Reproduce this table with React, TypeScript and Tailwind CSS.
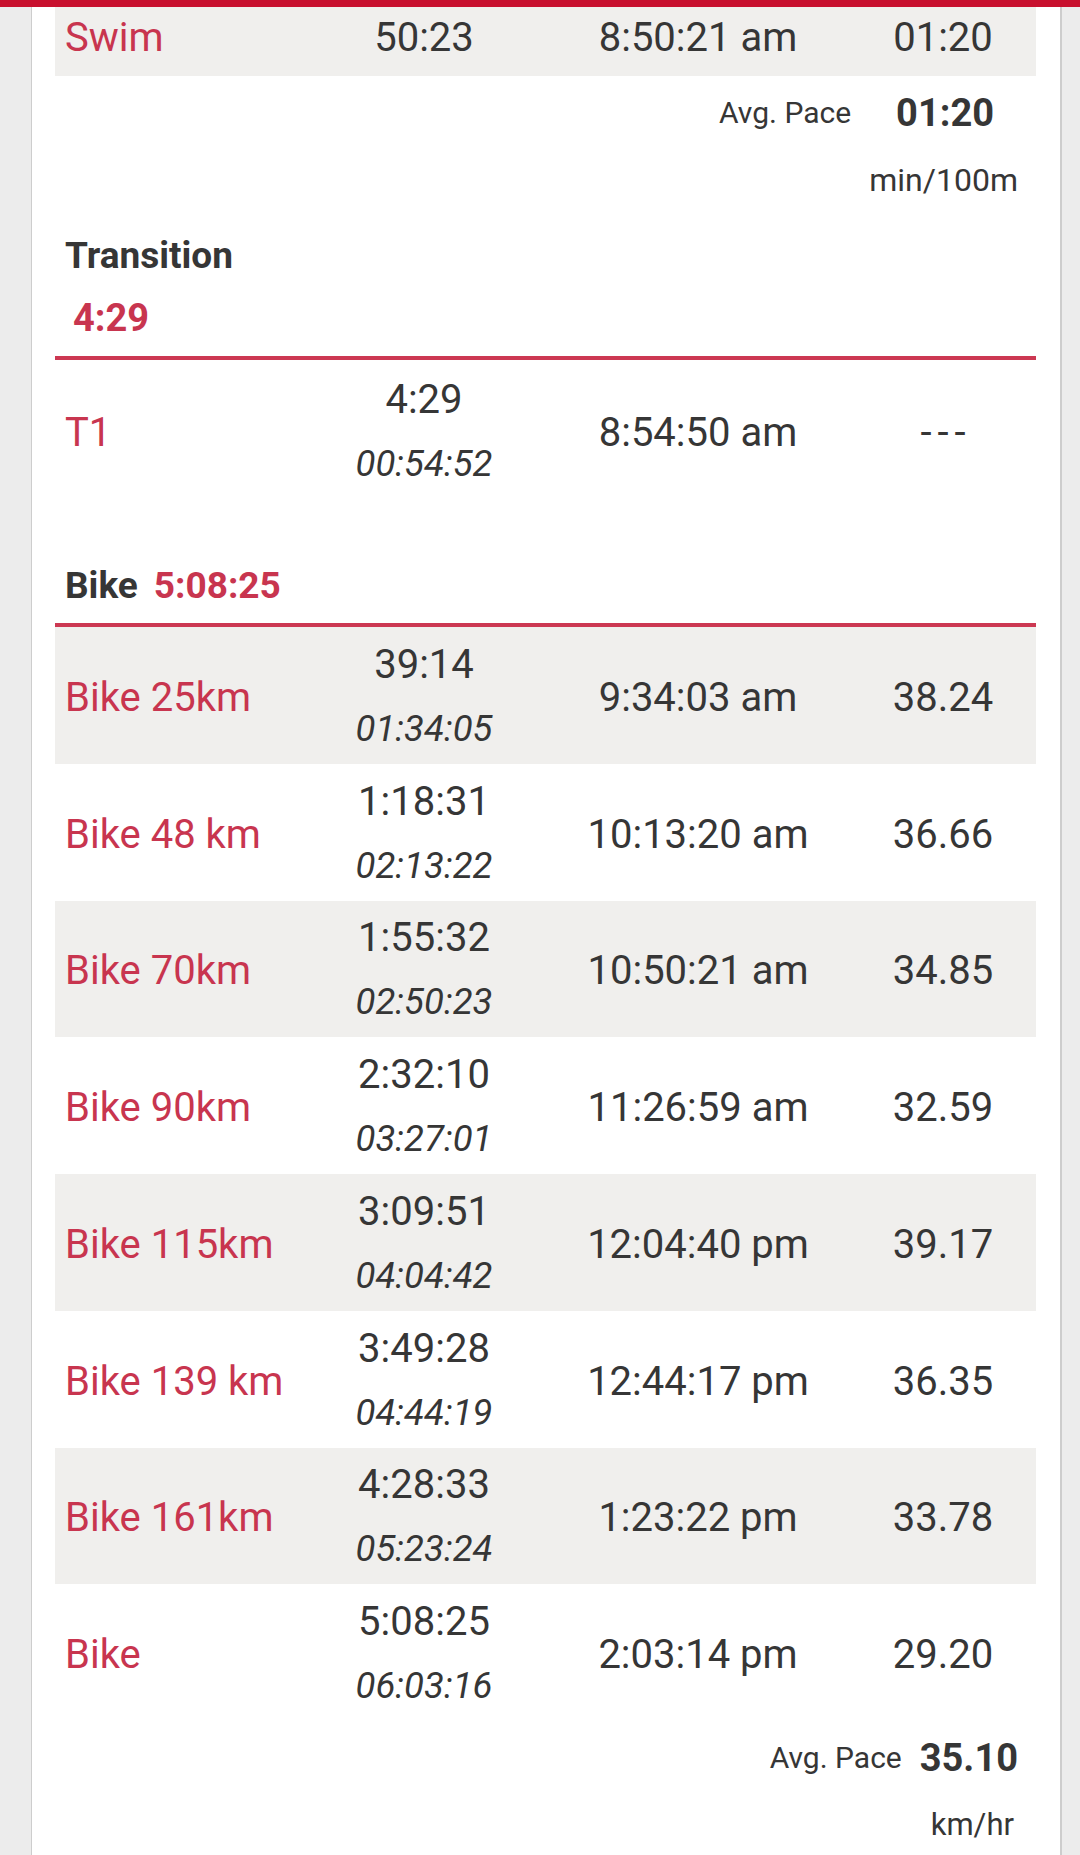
import React from "react";

type Row = { name: string; split: string; cum: string; tod: string; pace: string };

const bikeRows: Row[] = [
  { name: "Bike 25km", split: "39:14", cum: "01:34:05", tod: "9:34:03 am", pace: "38.24" },
  { name: "Bike 48 km", split: "1:18:31", cum: "02:13:22", tod: "10:13:20 am", pace: "36.66" },
  { name: "Bike 70km", split: "1:55:32", cum: "02:50:23", tod: "10:50:21 am", pace: "34.85" },
  { name: "Bike 90km", split: "2:32:10", cum: "03:27:01", tod: "11:26:59 am", pace: "32.59" },
  { name: "Bike 115km", split: "3:09:51", cum: "04:04:42", tod: "12:04:40 pm", pace: "39.17" },
  { name: "Bike 139 km", split: "3:49:28", cum: "04:44:19", tod: "12:44:17 pm", pace: "36.35" },
  { name: "Bike 161km", split: "4:28:33", cum: "05:23:24", tod: "1:23:22 pm", pace: "33.78" },
  { name: "Bike", split: "5:08:25", cum: "06:03:16", tod: "2:03:14 pm", pace: "29.20" },
];

function SplitRow({ row, shaded, height }: { row: Row; shaded: boolean; height: string }) {
  const isDash = row.pace === "---";
  return (
    <div
      className={`grid grid-cols-[247px_244px_304px_186px] items-center ${height} ${
        shaded ? "bg-[#f0efed]" : "bg-white"
      }`}
    >
      <div className="pl-[10px] pt-[5px] text-[40px] leading-[40px] text-[#c8354f]">{row.name}</div>
      <div className="flex flex-col items-center pt-[3px]">
        <div className="text-[40px] leading-[64px]">{row.split}</div>
        <div className="text-[36.5px] italic leading-[64px]">{row.cum}</div>
      </div>
      <div className="pt-[5px] text-center text-[40px] leading-[40px]">{row.tod}</div>
      {isDash ? (
        <div className="pl-[6px] pt-[5px] text-center text-[40px] leading-[40px] tracking-[6px]">{row.pace}</div>
      ) : (
        <div className="pt-[5px] text-center text-[40px] leading-[40px]">{row.pace}</div>
      )}
    </div>
  );
}

export default function App() {
  return (
    <div className="min-h-[1855px] bg-[#ececec] font-[Roboto,sans-serif] text-[#363636]">
      <div className="h-[7px] bg-[#c8102e]" />
      <div className="ml-[31px] min-h-[1848px] w-[1031px] border-l border-r-2 border-[#cdcdcd] bg-white pl-[23px] pr-[24px] pb-[10px]">
        {/* Swim row (cut at top) */}
        <div className="grid h-[69px] grid-cols-[247px_244px_304px_186px] items-center bg-[#f0efed] pb-[8px]">
          <div className="pl-[10px] text-[40px] leading-[40px] text-[#c8354f]">Swim</div>
          <div className="text-center text-[40px] leading-[40px]">50:23</div>
          <div className="text-center text-[40px] leading-[40px]">8:50:21 am</div>
          <div className="text-center text-[40px] leading-[40px]">01:20</div>
        </div>

        <div className="mt-[17px] flex h-[40px] items-center justify-end gap-[45px] pr-[42px]">
          <span className="text-[30px] leading-[40px]">Avg. Pace</span>
          <span className="text-[38px] font-bold leading-[40px]">01:20</span>
        </div>
        <div className="mt-[27px] flex h-[40px] items-center justify-end pr-[18px]">
          <span className="text-[32px] leading-[40px]">min/100m</span>
        </div>

        {/* Transition header */}
        <div className="mt-[36px] h-[40px] pl-[10px] text-[37px] font-bold leading-[40px]">Transition</div>
        <div className="mt-[21.5px] h-[40px] pl-[18px] text-[38px] font-bold leading-[40px] text-[#c8354f]">4:29</div>
        <div className="mt-[18.5px] h-[4px] bg-[#cc3852]" />

        <SplitRow
          row={{ name: "T1", split: "4:29", cum: "00:54:52", tod: "8:54:50 am", pace: "---" }}
          shaded={false}
          height="h-[140px]"
        />

        {/* Bike header */}
        <div className="mt-[65.5px] flex h-[40px] items-center gap-[16px] pl-[10px]">
          <span className="text-[37px] font-bold leading-[40px]">Bike</span>
          <span className="text-[37px] font-bold leading-[40px] text-[#c8354f]">5:08:25</span>
        </div>
        <div className="mt-[17.5px] h-[4px] bg-[#cc3852]" />

        {bikeRows.map((r, i) => (
          <SplitRow key={r.name + i} row={r} shaded={i % 2 === 0} height="h-[136.75px]" />
        ))}

        <div className="mt-[16.5px] flex h-[40px] items-center justify-end gap-[18px] pr-[18px]">
          <span className="text-[30px] leading-[40px]">Avg. Pace</span>
          <span className="text-[38px] font-bold leading-[40px]">35.10</span>
        </div>
        <div className="mt-[27.5px] flex h-[40px] items-center justify-end pr-[22px]">
          <span className="text-[31px] leading-[40px]">km/hr</span>
        </div>
      </div>
    </div>
  );
}
